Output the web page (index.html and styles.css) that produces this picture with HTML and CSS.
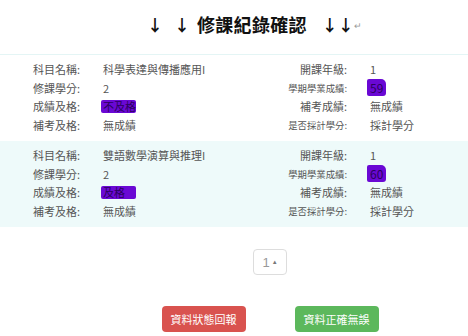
FILE: index.html
```html
<!DOCTYPE html>
<html lang="zh-Hant">
<head>
<meta charset="utf-8">
<title>修課紀錄確認</title>
<link rel="stylesheet" href="styles.css">
</head>
<body>
<div class="page">
  <h1 class="title"><span class="arr a1">↓</span><span class="arr a2">↓</span><span class="txt">修課紀錄確認</span><span class="arr a3">↓</span><span class="arr a4">↓</span><span class="ret">↵</span></h1>

  <div class="records">
    <div class="rec">
      <div class="lbl">科目名稱:</div><div class="val">科學表達與傳播應用I</div>
      <div class="lbl">開課年級:</div><div class="val">1</div>
      <div class="lbl">修課學分:</div><div class="val">2</div>
      <div class="lbl sm">學期學業成績:</div><div class="val"><span class="mark mark-num">59</span></div>
      <div class="lbl">成績及格:</div><div class="val"><span class="mark mark-word">不及格</span></div>
      <div class="lbl">補考成績:</div><div class="val">無成績</div>
      <div class="lbl">補考及格:</div><div class="val">無成績</div>
      <div class="lbl sm">是否採計學分:</div><div class="val">採計學分</div>
    </div>
    <div class="rec alt">
      <div class="lbl">科目名稱:</div><div class="val">雙語數學演算與推理I</div>
      <div class="lbl">開課年級:</div><div class="val">1</div>
      <div class="lbl">修課學分:</div><div class="val">2</div>
      <div class="lbl sm">學期學業成績:</div><div class="val"><span class="mark mark-num">60</span></div>
      <div class="lbl">成績及格:</div><div class="val"><span class="mark mark-word">及格</span></div>
      <div class="lbl">補考成績:</div><div class="val">無成績</div>
      <div class="lbl">補考及格:</div><div class="val">無成績</div>
      <div class="lbl sm">是否採計學分:</div><div class="val">採計學分</div>
    </div>
  </div>

  <div class="pager"><span class="pg">1<span class="caret">▲</span></span></div>

  <div class="actions">
    <button class="btn btn-red">資料狀態回報</button>
    <button class="btn btn-green">資料正確無誤</button>
  </div>
</div>
</body>
</html>
```

FILE: styles.css
```css
html, body {
  margin: 0;
  padding: 0;
  background: #fff;
  overflow: hidden;
}
body {
  width: 468px;
  height: 336px;
  font-family: "Noto Sans CJK TC", "Noto Sans", sans-serif;
  color: #555;
}
.page {
  width: 540px;
}
.title {
  margin: 0;
  padding-bottom: 6px;
  height: 54px;
  box-sizing: border-box;
  display: flex;
  align-items: center;
  font-size: 18px;
  line-height: 24px;
  font-weight: bold;
  color: #111;
}
.arr {
  display: inline-block;
  width: 16px;
  text-align: center;
  font-weight: bold;
  font-size: 16px;
}
.a1 { margin-left: 147px; }
.a2 { margin-left: 11px; }
.txt { margin-left: 7px; letter-spacing: 0.3px; }
.a3 { margin-left: 15px; }
.a4 { margin-left: 0; }
.ret {
  font-size: 9px;
  font-weight: normal;
  color: #999;
  margin-left: 0;
  margin-top: 3px;
}
.records {
  border-top: 1px solid #e4f5f5;
}
.rec {
  display: grid;
  grid-template-columns: 80px 187px 80px 1fr;
  grid-auto-rows: 18.5px;
  padding: 5px 0 7px;
  font-size: 11px;
  line-height: 18.5px;
}
.rec.alt {
  background: #eefafa;
}
.lbl {
  text-align: right;
  white-space: nowrap;
}
.lbl.sm {
  font-size: 9.4px;
}
.val {
  padding-left: 23px;
  white-space: nowrap;
}
.mark {
  display: inline-block;
  background: #6a08d4;
  color: #2c0060;
  line-height: 13px;
  border-radius: 2px;
}
.mark-word {
  width: 35px;
  margin-left: -2px;
  padding-left: 2px;
  box-sizing: border-box;
}
.mark-num {
  width: 19px;
  height: 17px;
  line-height: 17px;
  margin-left: -3px;
  padding-left: 3px;
  box-sizing: border-box;
  font-size: 12px;
  border-radius: 2px 5px 3px 2px;
}
.pager {
  display: flex;
  justify-content: center;
  margin-top: 22px;
}
.pg {
  display: inline-flex;
  align-items: center;
  justify-content: center;
  width: 34px;
  height: 26px;
  box-sizing: border-box;
  border: 1px solid #ddd;
  border-radius: 4px;
  font-size: 13px;
  color: #999;
  font-family: "Liberation Sans", sans-serif;
}
.caret {
  font-size: 6px;
  margin-left: 2px;
  color: #777;
}
.actions {
  display: flex;
  justify-content: center;
  gap: 49px;
  margin-top: 31px;
}
.btn {
  width: 84px;
  height: 26px;
  border: none;
  border-radius: 4px;
  color: #fff;
  font-family: "Noto Sans CJK TC", sans-serif;
  font-size: 11px;
  padding: 0;
}
.btn-red { background: #d9534f; }
.btn-green { background: #5cb85c; }
```
